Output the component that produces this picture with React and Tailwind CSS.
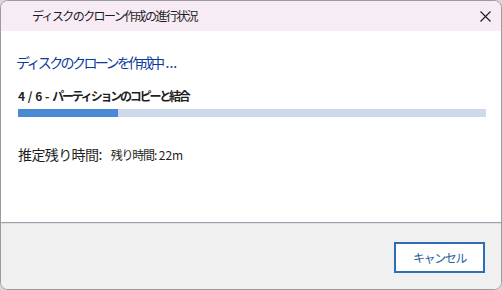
import React from 'react';

const jp = { fontFamily: '"Noto Sans CJK JP", "Noto Sans", sans-serif' };

function CloseIcon() {
  return (
    <svg width="11" height="11" viewBox="0 0 11 11" fill="none" stroke="#1a1a1a" strokeWidth="1.1">
      <path d="M0.5 0.5 L10.5 10.5 M10.5 0.5 L0.5 10.5" />
    </svg>
  );
}

export default function App() {
  const step = 4;
  const total = 6;
  // progress fill is ~21% of the track in the reference
  const progress = 21.4;

  return (
    <div className="w-[502px] h-[290px] bg-[#d9d6d9] overflow-hidden" style={jp}>
      <div className="w-[502px] h-[290px] flex flex-col rounded-[8px] border border-[#9c9c9c] bg-white overflow-hidden">
        {/* title bar */}
        <div className="h-[30px] shrink-0 flex items-center justify-between bg-[#f7ebf5] pl-[31px] pr-[10px]">
          <span className="text-[12px] tracking-[-1.6px] text-[#1b1b1b] leading-none">ディスクのクローン作成の進行状況</span>
          <CloseIcon />
        </div>

        {/* body */}
        <div className="flex-1 flex flex-col px-[17px] pt-[24px]">
          <div className="text-[14px] leading-none text-[#0b3a9c] -ml-[2px]">
            <span className="tracking-[-2.6px]">ディスクのクローンを作成中</span>
            <span className="ml-[3px]">...</span>
          </div>
          <div className="mt-[21px] text-[12px] font-bold leading-none text-[#1f1f1f]">
            <span>{step} / {total} - </span>
            <span className="tracking-[-2.2px]">パーティションのコピーと結合</span>
          </div>
          <div className="mt-[7px] h-[8px] w-[468px] bg-[#cdd9ea]">
            <div className="h-full bg-[#4a8ad4]" style={{ width: `${progress}%` }} />
          </div>
          <div className="mt-[30px] flex items-baseline leading-none text-[#1f1f1f]">
            <span className="text-[14px] tracking-[-0.6px]">推定残り時間:</span>
            <span className="ml-[9px] text-[12px]">
              <span className="tracking-[-1.2px]">残り時間:</span> 22m
            </span>
          </div>
        </div>

        {/* footer */}
        <div className="h-[67px] shrink-0 flex items-start justify-end bg-[#f0f0f0] border-t border-[#a0a0a0] shadow-[inset_0_1px_0_#d6e1ee] pr-[16px] pt-[19px]">
          <button className="w-[91px] h-[31px] border-2 border-[#2f6db5] bg-white text-[12px] tracking-[-1.4px] text-[#2b5fa0] leading-none" style={jp}>
            キャンセル
          </button>
        </div>
      </div>
    </div>
  );
}
